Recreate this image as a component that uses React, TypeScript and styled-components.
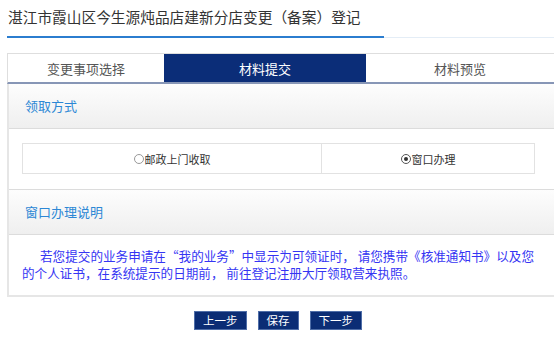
import styled, { createGlobalStyle } from "styled-components";

const GlobalStyle = createGlobalStyle`
  html, body {
    margin: 0;
    padding: 0;
    background: #fff;
    overflow: hidden;
  }
  body {
    font-family: "Noto Sans CJK SC", "Noto Sans", sans-serif;
  }
`;

const Page = styled.div`
  width: 554px;
  height: 355px;
  padding-left: 7px;
  box-sizing: border-box;
`;

const TitleBar = styled.div`
  display: flex;
  border-bottom: 1px solid #e4edf6;
  height: 37px;
`;

const Title = styled.h1`
  margin: 0;
  width: 376px;
  padding: 7px 0 0 1px;
  height: 29px;
  font-size: 14.7px;
  line-height: 20px;
  font-weight: normal;
  color: #333;
  border-bottom: 2px solid #2b7dcf;
  white-space: nowrap;
`;

const Tabs = styled.div`
  margin-top: 15px;
  display: grid;
  grid-template-columns: 156px 202px 1fr;
  width: 547px;
  border-top: 1px solid #dedede;
  border-left: 1px solid #dedede;
  border-bottom: 2px solid #8796b6;
  box-sizing: border-box;
`;

const Tab = styled.div<{ $active?: boolean }>`
  height: 28px;
  line-height: 29px;
  text-align: center;
  font-size: 13px;
  color: ${(p) => (p.$active ? "#fff" : "#555")};
  background: ${(p) => (p.$active ? "#0b2d78" : "#fff")};
`;

const Panel = styled.div`
  width: 547px;
  border-left: 2px solid #e6e6e6;
  border-bottom: 2px solid #e6e6e6;
  box-sizing: border-box;
`;

const SectionHead = styled.div<{ $top?: boolean }>`
  height: 44px;
  line-height: 44px;
  padding-left: 16px;
  font-size: 13px;
  color: #2c87d5;
  background: linear-gradient(#fdfdfd, #efefef);
  border-bottom: 1px solid #dcdcdc;
  border-top: ${(p) => (p.$top ? "1px solid #dcdcdc" : "none")};
`;

const OptionsBody = styled.div`
  padding: 14px 0 15px 13px;
`;

const OptionTable = styled.div`
  display: grid;
  grid-template-columns: 299px 1fr;
  width: 513px;
  height: 31px;
  border: 1px solid #e2e2e2;
  box-sizing: border-box;
`;

const OptionCell = styled.label<{ $divider?: boolean }>`
  display: flex;
  align-items: center;
  justify-content: center;
  font-size: 11px;
  color: #333;
  border-right: ${(p) => (p.$divider ? "1px solid #e2e2e2" : "none")};
`;

const Radio = styled.span<{ $checked?: boolean }>`
  width: 8px;
  height: 8px;
  border-radius: 50%;
  border: 1px solid ${(p) => (p.$checked ? "#555" : "#999")};
  margin-right: 1px;
  display: inline-flex;
  align-items: center;
  justify-content: center;
  &::after {
    content: "";
    width: 4px;
    height: 4px;
    border-radius: 50%;
    background: ${(p) => (p.$checked ? "#333" : "transparent")};
  }
`;

const Notice = styled.p`
  margin: 0;
  padding: 13px 12px 14px 13px;
  font-size: 12.6px;
  line-height: 16.5px;
  color: #3535f3;
  white-space: nowrap;
`;

const Indent = styled.span`
  display: inline-block;
  width: 18px;
`;

const Actions = styled.div`
  display: flex;
  justify-content: center;
  gap: 11px;
  margin-top: 14px;
  padding-right: 5px;
`;

const Button = styled.button`
  height: 19px;
  padding: 0 8px;
  font-family: inherit;
  font-size: 11.5px;
  line-height: 17px;
  color: #fff;
  background: #0b2d75;
  border: 1px solid #4f6ea8;
  cursor: pointer;
`;

export default function App() {
  return (
    <>
      <GlobalStyle />
      <Page>
        <TitleBar>
          <Title>湛江市霞山区今生源炖品店建新分店变更（备案）登记</Title>
        </TitleBar>

        <Tabs>
          <Tab>变更事项选择</Tab>
          <Tab $active>材料提交</Tab>
          <Tab>材料预览</Tab>
        </Tabs>

        <Panel>
          <SectionHead>领取方式</SectionHead>
          <OptionsBody>
            <OptionTable>
              <OptionCell $divider>
                <Radio />
                邮政上门收取
              </OptionCell>
              <OptionCell>
                <Radio $checked />
                窗口办理
              </OptionCell>
            </OptionTable>
          </OptionsBody>

          <SectionHead $top>窗口办理说明</SectionHead>
          <Notice>
            <Indent />
            若您提交的业务申请在“我的业务”中显示为可领证时， 请您携带《核准通知书》以及您
            <br />
            的个人证书，在系统提示的日期前， 前往登记注册大厅领取营来执照。
          </Notice>
        </Panel>

        <Actions>
          <Button>上一步</Button>
          <Button>保存</Button>
          <Button>下一步</Button>
        </Actions>
      </Page>
    </>
  );
}
